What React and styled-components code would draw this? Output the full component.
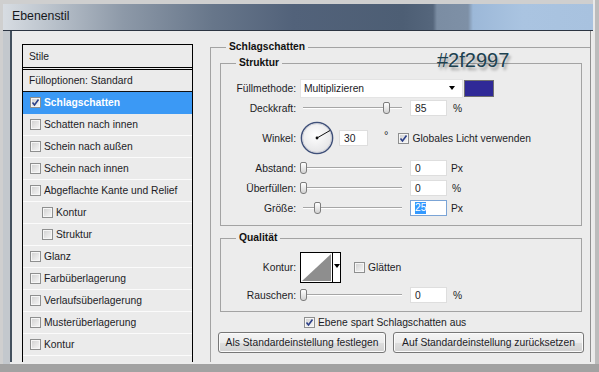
import React from 'react';
import styled, { createGlobalStyle } from 'styled-components';

const GlobalStyle = createGlobalStyle`
  html, body { margin: 0; padding: 0; background: #c8c8c8; }
  body { font-family: "Liberation Sans", Arial, sans-serif; font-size: 10.3px; color: #1c1c26; }
  * { box-sizing: border-box; }
`;

const Frame = styled.div`
  width: 599px;
  height: 372px;
  overflow: hidden;
  background: linear-gradient(to right, #cfcfcf 0, #cfcfcf 593px, #e9e9e9 593px, #e9e9e9 595px, #bcbcbc 595px);
  padding: 4px 6px 0 3px;
  border-bottom: 8px solid #a2a2a2;
  display: flex;
  flex-direction: column;
`;

const Window = styled.div`
  flex: 1;
  display: flex;
  flex-direction: column;
  min-height: 0;
  background: linear-gradient(to right, #c3c8cd 0, #c3c8cd 7px, #ececec 7px);
`;

const TitleBar = styled.div`
  height: 27px;
  flex-shrink: 0;
  display: flex;
  align-items: center;
  padding: 0 0 3px 9px;
  border-bottom: 1px solid #2c3542;
  background: linear-gradient(to right,
    #d7dce2 0px, #bcc4cd 45px, #8d99a8 120px, #67768a 210px, #52627a 290px,
    #4d5e74 400px, #55667c 430px, #7b8da3 434px, #7e90a6 465px, #9cb8d8 470px,
    #aac4e1 520px, #a8c2df 590px);
`;

const Title = styled.span`
  font-size: 12.3px;
  color: #16181c;
`;

const Body = styled.div`
  position: relative;
  flex: 1;
  min-height: 0;
  margin: 0 2px 2px 7px;
  border-left: 2px solid #43505e;
  border-right: 1px solid #8f8f8f;
  background: #ececec;
  padding: 10px 0 0 10px;
  display: flex;
  gap: 17px;
  overflow: hidden;
`;

const StyleList = styled.div`
  width: 171px;
  flex-shrink: 0;
  margin-top: 3px;
  border: 1px solid #000;
  border-bottom: none;
  background: #ebebeb;
  display: flex;
  flex-direction: column;
`;

const ListHeader = styled.div`
  height: 25px;
  flex-shrink: 0;
  display: flex;
  align-items: center;
  padding-left: 6px;
  border-bottom: 3px double #000;
`;

const BlendRow = styled.div`
  height: 22px;
  flex-shrink: 0;
  display: flex;
  align-items: center;
  padding-left: 6px;
  border-bottom: 1px solid #111;
`;

const ListItem = styled.div`
  height: 22px;
  flex-shrink: 0;
  display: flex;
  align-items: center;
  gap: 3px;
  padding-left: ${p => (p.$indent ? 19 : 7)}px;
  border-bottom: 1px solid ${p => (p.$active ? '#3b99f5' : '#fbfbfb')};
  background: ${p => (p.$active ? '#3b99f5' : 'transparent')};
  color: ${p => (p.$active ? '#ffffff' : 'inherit')};
  font-weight: ${p => (p.$active ? 'bold' : 'normal')};
`;

const CheckBox = styled.span`
  width: 11px;
  height: 11px;
  flex-shrink: 0;
  display: inline-flex;
  border: 1px solid #8e8f8f;
  box-shadow: inset 0 0 0 1px #f6f6f6;
  background: linear-gradient(135deg, #cfcfcf 0%, #e6e6e6 55%, #f7f7f7 100%);
  svg { display: block; }
`;

function Check({ checked }) {
  return (
    <CheckBox>
      {checked && (
        <svg width="9" height="9" viewBox="0 0 9 9">
          <polyline points="1.5,4.5 3.5,7 7.5,1.5" fill="none" stroke="#2b3f88" strokeWidth="1.6" />
        </svg>
      )}
    </CheckBox>
  );
}

const Panel = styled.fieldset`
  flex: 1;
  min-width: 0;
  margin: 0;
  padding: 4px 8px 0 9px;
  border: 1px solid #a3a3a3;
  border-right: none;
  border-bottom: none;
`;

const Legend = styled.legend`
  font-weight: bold;
  font-size: 10.3px;
  line-height: 12px;
  padding: 0 3px;
  margin-left: ${p => p.$offset}px;
  color: #111;
`;

const Group = styled.fieldset`
  margin: ${p => p.$mt || 0}px 0 0;
  padding: ${p => p.$pt}px 0 ${p => p.$pb}px 0;
  border: 1px solid #a3a3a3;
  min-width: 0;
`;

const Row = styled.div`
  height: ${p => p.$h || 20}px;
  margin-top: ${p => p.$mt || 0}px;
  display: flex;
  align-items: center;
`;

const Label = styled.span`
  width: 75px;
  flex-shrink: 0;
  text-align: right;
  margin-right: 4px;
`;

const Select = styled.div`
  width: 163px;
  height: 19px;
  background: #fff;
  border: 1px solid #e4e4e4;
  display: flex;
  align-items: center;
  justify-content: space-between;
  padding: 0 7px 0 3px;
`;

const DropArrow = styled.span`
  width: 0;
  height: 0;
  border-left: 3.5px solid transparent;
  border-right: 3.5px solid transparent;
  border-top: 4px solid #000;
`;

const Swatch = styled.span`
  width: 30px;
  height: 17px;
  margin-left: 1px;
  border: 1px solid #707070;
  background: #2f2997;
`;

const Slider = styled.div`
  position: relative;
  width: 104px;
  height: 20px;
  flex-shrink: 0;
  background:
    linear-gradient(#a6a6a6, #a6a6a6) no-repeat 3px 9px / 99px 1px,
    linear-gradient(#ffffff, #ffffff) no-repeat 3px 10px / 99px 1px;
`;

const Thumb = styled.span`
  position: absolute;
  top: 4px;
  width: 7px;
  height: 12px;
  border: 1px solid #7c7c7c;
  border-radius: 2px 2px 3px 3px;
  background: linear-gradient(#ffffff, #d2d2d2);
`;

const Field = styled.div`
  width: ${p => p.$w || 37}px;
  height: 16px;
  margin-left: ${p => p.$ml || 0}px;
  flex-shrink: 0;
  background: #fff;
  border: 1px solid ${p => (p.$focus ? '#7ba4d6' : '#dedede')};
  padding-left: 4px;
  display: flex;
  align-items: center;
`;

const Selected = styled.span`
  background: #3399ff;
  color: #fff;
  line-height: 12px;
`;

const Unit = styled.span`
  margin-left: ${p => p.$ml || 5}px;
`;

const Degree = styled.span`
  margin-left: 16px;
  align-self: flex-start;
  margin-top: 11px;
  font-size: 11px;
`;

const InlineCheck = styled.label`
  display: flex;
  align-items: center;
  gap: 3px;
  margin-left: ${p => p.$ml}px;
`;

const ContourBox = styled.div`
  width: 41px;
  height: 31px;
  border: 1px solid #000;
  background: #fff;
  display: flex;
  svg { display: block; }
`;

const ContourArrow = styled.div`
  width: 8px;
  border-left: 1px solid #000;
  display: flex;
  justify-content: center;
  padding-top: 11px;
`;

const CheckRow = styled.div`
  height: 18px;
  margin-top: 1px;
  padding-left: 84px;
  display: flex;
  align-items: center;
  gap: 3px;
`;

const ButtonRow = styled.div`
  margin: 1px -2px 0;
  display: flex;
  gap: 7px;
`;

const Button = styled.button`
  width: ${p => p.$w}px;
  height: 21px;
  padding: 0;
  font-family: inherit;
  font-size: 10.3px;
  color: #1c1c26;
  border: 1px solid #777;
  border-radius: 3px;
  box-shadow: inset 0 0 0 1px #fbfbfb;
  background: linear-gradient(#f4f4f4 0%, #ececec 50%, #dedede 51%, #d2d2d2 100%);
`;

const HexNote = styled.div`
  position: absolute;
  left: 425px;
  top: 19px;
  font-size: 20px;
  line-height: 20px;
  color: #1c4150;
  text-shadow: 2px 3px 3px rgba(0, 0, 0, 0.35);
`;

const styleItems = [
  { label: 'Schlagschatten', checked: true, active: true },
  { label: 'Schatten nach innen' },
  { label: 'Schein nach außen' },
  { label: 'Schein nach innen' },
  { label: 'Abgeflachte Kante und Relief' },
  { label: 'Kontur', indent: true },
  { label: 'Struktur', indent: true },
  { label: 'Glanz' },
  { label: 'Farbüberlagerung' },
  { label: 'Verlaufsüberlagerung' },
  { label: 'Musterüberlagerung' },
  { label: 'Kontur' },
  { label: '' },
];

function SliderField({ pos }) {
  return (
    <Slider>
      <Thumb style={{ left: pos }} />
    </Slider>
  );
}

function Dial() {
  return (
    <svg width="34" height="34" viewBox="0 0 34 34">
      <defs>
        <radialGradient id="dialFill" cx="45%" cy="40%" r="65%">
          <stop offset="0" stopColor="#ffffff" />
          <stop offset="1" stopColor="#e2e2e4" />
        </radialGradient>
      </defs>
      <circle cx="17" cy="17" r="15.6" fill="url(#dialFill)" stroke="#3f5079" strokeWidth="1.5" />
      <circle cx="17" cy="17" r="14.4" fill="none" stroke="#c9ccd6" strokeWidth="0.8" />
      <line x1="17" y1="17" x2="30" y2="9.5" stroke="#111" strokeWidth="1" />
      <circle cx="17" cy="17" r="1.4" fill="#111" />
    </svg>
  );
}

export default function App() {
  return (
    <>
      <GlobalStyle />
      <Frame>
        <Window>
          <TitleBar>
            <Title>Ebenenstil</Title>
          </TitleBar>
          <Body>
            <StyleList>
              <ListHeader>Stile</ListHeader>
              <BlendRow>Fülloptionen: Standard</BlendRow>
              {styleItems.map((s, i) => (
                <ListItem key={i} $active={s.active} $indent={s.indent}>
                  {s.label && <Check checked={s.checked} />}
                  <span>{s.label}</span>
                </ListItem>
              ))}
            </StyleList>

            <Panel>
              <Legend $offset={6}>Schlagschatten</Legend>
              <Group $pt={9} $pb={7}>
                <Legend $offset={15}>Struktur</Legend>
                <Row>
                  <Label>Füllmethode:</Label>
                  <Select>
                    <span>Multiplizieren</span>
                    <DropArrow />
                  </Select>
                  <Swatch />
                </Row>
                <Row>
                  <Label>Deckkraft:</Label>
                  <SliderField pos={83} />
                  <Field $ml={6}>85</Field>
                  <Unit $ml={6}>%</Unit>
                </Row>
                <Row $h={40}>
                  <Label>Winkel:</Label>
                  <Dial />
                  <Field $w={29} $ml={5}>30</Field>
                  <Degree>°</Degree>
                  <InlineCheck $ml={10}>
                    <Check checked />
                    <span>Globales Licht verwenden</span>
                  </InlineCheck>
                </Row>
                <Row>
                  <Label>Abstand:</Label>
                  <SliderField pos={0} />
                  <Field $ml={6}>0</Field>
                  <Unit $ml={4}>Px</Unit>
                </Row>
                <Row>
                  <Label>Überfüllen:</Label>
                  <SliderField pos={0} />
                  <Field $ml={6}>0</Field>
                  <Unit $ml={5}>%</Unit>
                </Row>
                <Row>
                  <Label>Größe:</Label>
                  <SliderField pos={14} />
                  <Field $ml={6} $focus>
                    <Selected>25</Selected>
                  </Field>
                  <Unit $ml={4}>Px</Unit>
                </Row>
              </Group>

              <Group $mt={6} $pt={8} $pb={6}>
                <Legend $offset={15}>Qualität</Legend>
                <Row $h={30}>
                  <Label>Kontur:</Label>
                  <ContourBox>
                    <svg width="31" height="29" viewBox="0 0 31 29">
                      <polygon points="1,28 30,1 30,28" fill="#8e8e8e" />
                    </svg>
                    <ContourArrow>
                      <DropArrow />
                    </ContourArrow>
                  </ContourBox>
                  <InlineCheck $ml={13}>
                    <Check />
                    <span>Glätten</span>
                  </InlineCheck>
                </Row>
                <Row $mt={3}>
                  <Label>Rauschen:</Label>
                  <SliderField pos={0} />
                  <Field $ml={6}>0</Field>
                  <Unit $ml={6}>%</Unit>
                </Row>
              </Group>

              <CheckRow>
                <Check checked />
                <span>Ebene spart Schlagschatten aus</span>
              </CheckRow>
              <ButtonRow>
                <Button $w={168}>Als Standardeinstellung festlegen</Button>
                <Button $w={191}>Auf Standardeinstellung zurücksetzen</Button>
              </ButtonRow>
            </Panel>

            <HexNote>#2f2997</HexNote>
          </Body>
        </Window>
      </Frame>
    </>
  );
}
